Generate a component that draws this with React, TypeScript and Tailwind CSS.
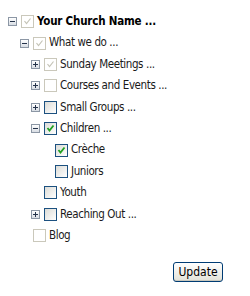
import React from "react";

type Node = {
  label: string;
  level: number;
  expander?: "plus" | "minus";
  box: "disabledChecked" | "disabled" | "empty" | "checked";
  bold?: boolean;
};

const nodes: Node[] = [
  { label: "Your Church Name ...", level: 0, expander: "minus", box: "disabledChecked", bold: true },
  { label: "What we do ...", level: 1, expander: "minus", box: "disabledChecked" },
  { label: "Sunday Meetings ...", level: 2, expander: "plus", box: "disabledChecked" },
  { label: "Courses and Events ...", level: 2, expander: "plus", box: "disabled" },
  { label: "Small Groups ...", level: 2, expander: "plus", box: "empty" },
  { label: "Children ...", level: 2, expander: "minus", box: "checked" },
  { label: "Crèche", level: 3, box: "checked" },
  { label: "Juniors", level: 3, box: "empty" },
  { label: "Youth", level: 2, box: "empty" },
  { label: "Reaching Out ...", level: 2, expander: "plus", box: "empty" },
  { label: "Blog", level: 1, box: "disabled" },
];

const indent = ["pl-[8px]", "pl-[20px]", "pl-[31px]", "pl-[42px]"];

const Expander = ({ kind }: { kind?: "plus" | "minus" }) => {
  if (!kind) return <span className="w-[9px] h-[9px] shrink-0" />;
  return (
    <span className="w-[9px] h-[9px] shrink-0 border border-[#8c97a5] bg-gradient-to-b from-white to-[#d8dde4] relative">
      <span className="absolute left-[1px] top-[3px] w-[5px] h-[1px] bg-[#25334a]" />
      {kind === "plus" && (
        <span className="absolute left-[3px] top-[1px] w-[1px] h-[5px] bg-[#25334a]" />
      )}
    </span>
  );
};

const Box = ({ kind }: { kind: Node["box"] }) => {
  const disabled = kind === "disabled" || kind === "disabledChecked";
  const checked = kind === "checked" || kind === "disabledChecked";
  return (
    <span
      className={
        disabled
          ? "w-[13px] h-[13px] shrink-0 border border-[#cac8bb] bg-white flex items-center justify-center"
          : "w-[13px] h-[13px] shrink-0 border border-[#1c5180] bg-gradient-to-br from-[#dcdcd7] to-white flex items-center justify-center"
      }
    >
      {checked && (
        <svg width="9" height="9" viewBox="0 0 9 9">
          <path
            d="M1.5 4 L3.5 6.5 L7.5 1.5"
            fill="none"
            stroke={disabled ? "#c4c3b6" : "#21a121"}
            strokeWidth={disabled ? 1.2 : 1.8}
          />
        </svg>
      )}
    </span>
  );
};

export default function App() {
  return (
    <div className="w-[250px] h-[296px] bg-white font-['DejaVu_Sans_Condensed','DejaVu_Sans',sans-serif] text-[11.5px] tracking-[-0.4px] text-[#1a1a1a] pt-[11px] relative">
      <div className="flex flex-col">
        {nodes.map((n, i) => (
          <div key={i} className={`flex items-center h-[21.4px] ${indent[n.level]}`}>
            <Expander kind={n.expander} />
            <span className="w-[4px] shrink-0" />
            <Box kind={n.box} />
            <span
              className={`ml-[3px] whitespace-nowrap ${
                n.bold ? "font-bold text-black tracking-[-0.2px]" : ""
              }`}
            >
              {n.label}
            </span>
          </div>
        ))}
      </div>
      <div className="flex justify-end pr-[27px] pt-[16px]">
        <button className="w-[50px] h-[20px] rounded-[3px] border border-[#003c74] bg-gradient-to-b from-white to-[#e3e2d8] text-[12px] tracking-normal text-black font-['DejaVu_Sans_Condensed',sans-serif] leading-none shadow-[inset_0_-1px_0_#c8c7bd]">
          Update
        </button>
      </div>
    </div>
  );
}
